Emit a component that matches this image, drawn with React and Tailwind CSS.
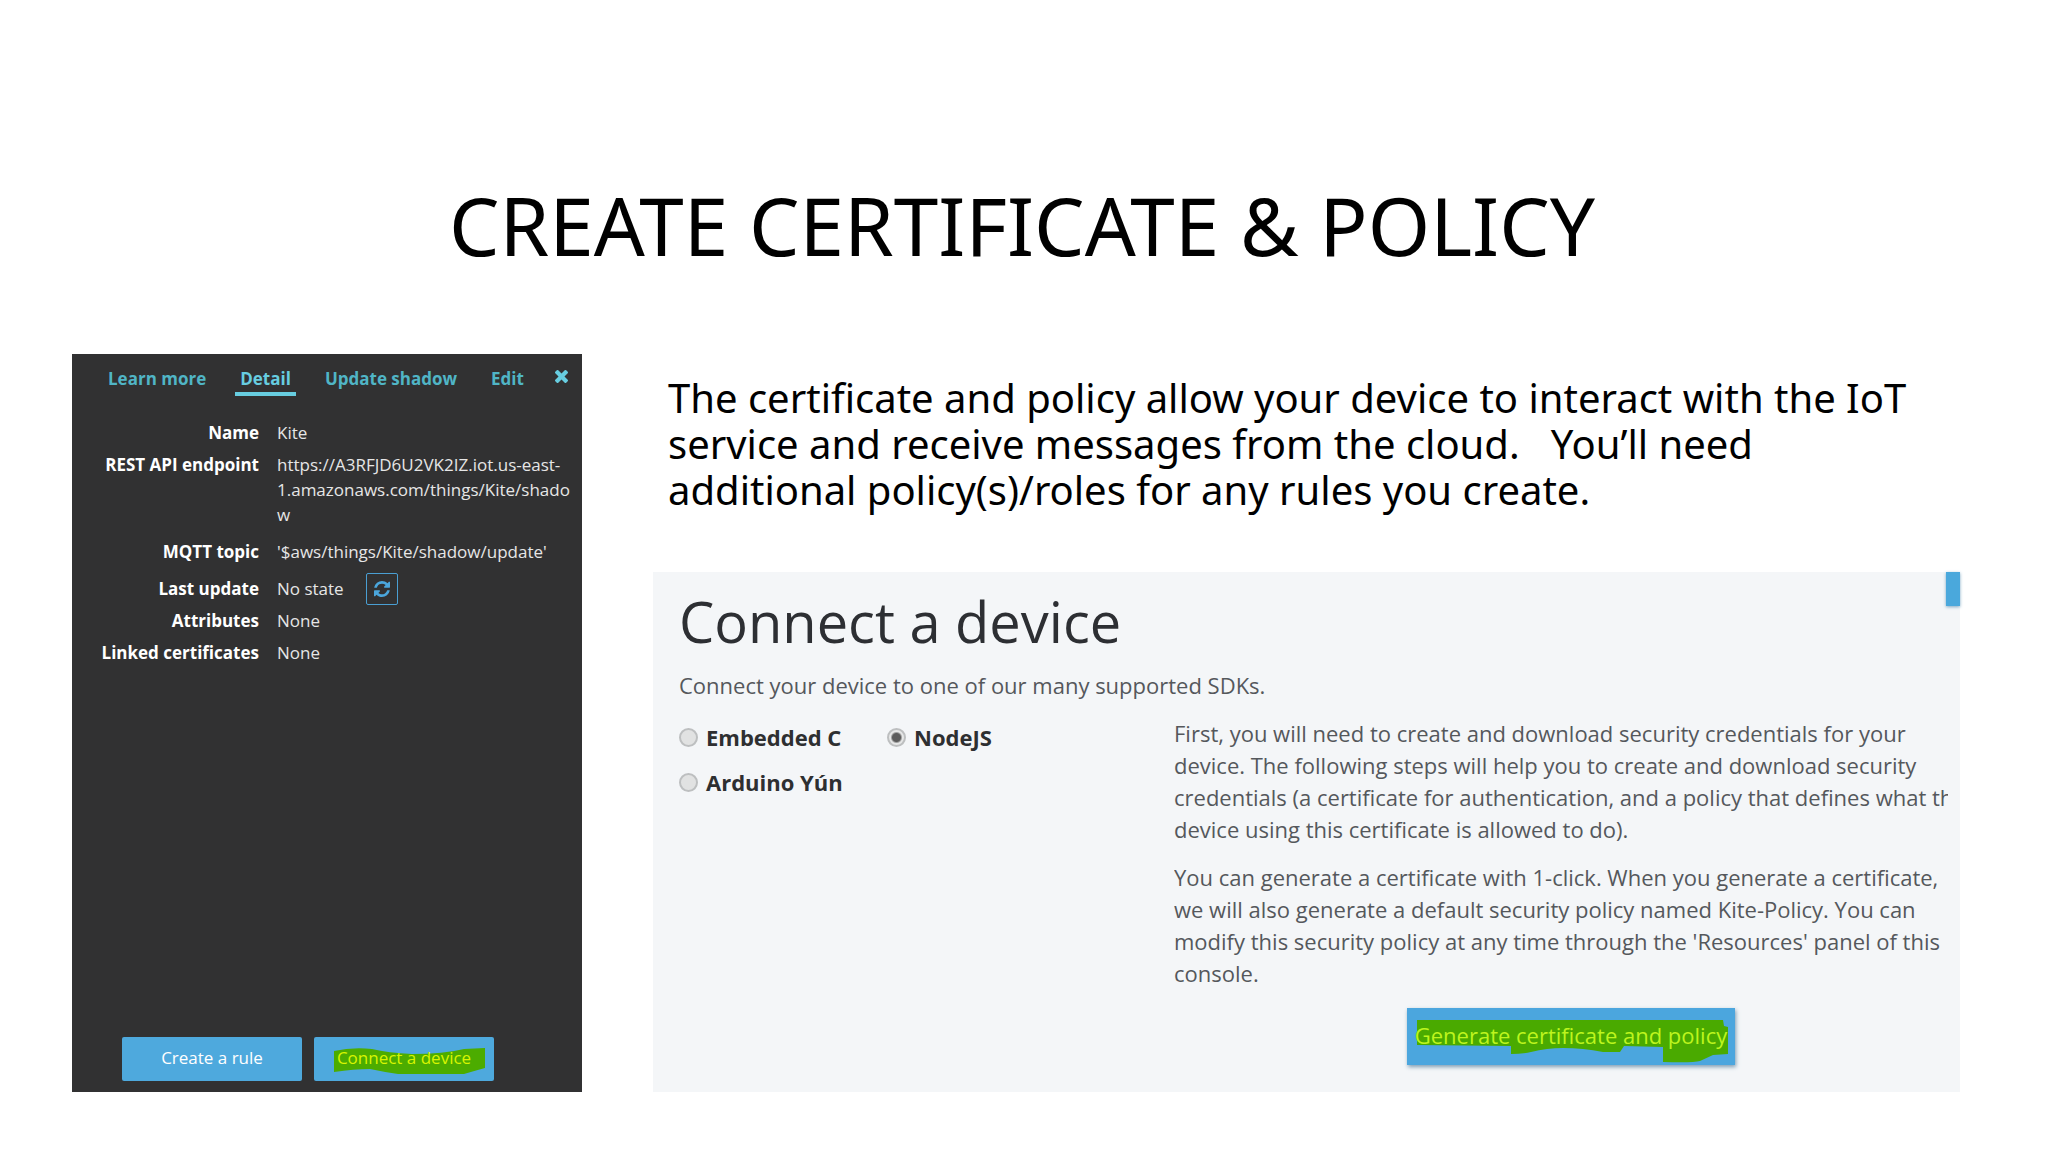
const tabs = ["Learn more", "Detail", "Update shadow", "Edit"];

function CloseIcon() {
  return (
    <svg viewBox="302 366 1188 1188" className="size-[13px]" fill="currentColor" aria-hidden="true">
      <path d="M1490 1322q0 40-28 68l-136 136q-28 28-68 28t-68-28l-294-294-294 294q-28 28-68 28t-68-28l-136-136q-28-28-28-68t28-68l294-294-294-294q-28-28-28-68t28-68l136-136q28-28 68-28t68 28l294 294 294-294q28-28 68-28t68 28l136 136q28 28 28 68t-28 68l-294 294 294 294q28 28 28 68z" />
    </svg>
  );
}

function RefreshIcon() {
  return (
    <svg viewBox="0 0 1536 1536" className="size-4" fill="currentColor" aria-hidden="true">
      <path d="M1511 928q0 5-1 7-64 268-268 434.5t-478 166.5q-146 0-282.5-55t-243.5-157l-129 129q-19 19-45 19t-45-19-19-45v-448q0-26 19-45t45-19h448q26 0 45 19t19 45-19 45l-137 137q71 66 161 102t187 36q134 0 250-65t186-179q11-17 53-117 8-23 30-23h192q13 0 22.5 9.5t9.5 22.5zm25-800v448q0 26-19 45t-45 19h-448q-26 0-45-19t-19-45 19-45l138-138q-148-137-349-137-134 0-250 65t-186 179q-11 17-53 117-8 23-30 23h-199q-13 0-22.5-9.5t-9.5-22.5v-7q65-268 270-434.5t480-166.5q146 0 284 55.5t245 156.5l130-129q19-19 45-19t45 19 19 45z" />
    </svg>
  );
}

function Row({ label, children, className = "" }) {
  return (
    <div className={`flex gap-[18px] ${className}`}>
      <dt className="w-[187px] shrink-0 text-right font-bold text-white">{label}</dt>
      <dd className="min-w-0 flex-1 break-all text-[#e6e6e6]">{children}</dd>
    </div>
  );
}

function DetailPanel() {
  return (
    <aside className="flex w-[510px] shrink-0 flex-col bg-[#313132] font-['Open_Sans',sans-serif] text-[17px] leading-[25px]">
      <nav className="flex items-start pt-3 pr-[14px] pl-[31px] font-bold text-[#50b5c6]">
        <div className="flex gap-6">
          {tabs.map((tab) => (
            <a
              key={tab}
              href="#"
              aria-current={tab === "Detail" ? "page" : undefined}
              className="border-b-4 border-transparent px-[5px] pb-px aria-[current=page]:border-[#67cde0] aria-[current=page]:text-[#67cde0]"
            >
              {tab}
            </a>
          ))}
        </div>
        <button type="button" aria-label="Close" className="mt-1 ml-auto text-[#67cde0]">
          <CloseIcon />
        </button>
      </nav>

      <dl className="mt-6 flex flex-col gap-[7px] pr-2">
        <Row label="Name">Kite</Row>
        <Row label="REST API endpoint" className="pb-[5px]">
          https://A3RFJD6U2VK2IZ.iot.us-east-
          <br />
          1.amazonaws.com/things/Kite/shado
          <br />w
        </Row>
        <Row label="MQTT topic" className="pb-[5px]">{"'$aws/things/Kite/shadow/update'"}</Row>
        <Row label="Last update">
          <div className="flex items-center gap-[22px]">
            No state
            <button
              type="button"
              aria-label="Refresh"
              className="-my-1 flex size-8 items-center justify-center rounded-xs border border-[#4a9fd3] text-[#4ba6dc]"
            >
              <RefreshIcon />
            </button>
          </div>
        </Row>
        <Row label="Attributes">None</Row>
        <Row label="Linked certificates">None</Row>
      </dl>

      <div className="mt-auto flex gap-3 px-[50px] pb-[11px]">
        <button type="button" className="h-11 w-[180px] rounded-xs bg-[#4ea9dd] pb-1 text-white">
          Create a rule
        </button>
        <button type="button" className="relative h-11 w-[180px] rounded-xs bg-[#4ea9dd] pb-1 text-[#d8f500]">
          <svg viewBox="0 0 180 44" className="absolute inset-0 size-full" fill="#4cac00" aria-hidden="true">
            <path d="M20 14Q38 10 58 12Q74 16 98 17Q130 17 150 12L171 11L171 31Q160 34 150 37H84Q70 35 56 32Q40 32 20 35Z" />
          </svg>
          <span className="relative">Connect a device</span>
        </button>
      </div>
    </aside>
  );
}

function Sdk({ id, label, checked }) {
  return (
    <div className="flex items-center gap-2">
      <input
        type="radio"
        name="sdk"
        id={id}
        defaultChecked={checked}
        className="size-[19px] appearance-none rounded-full border-2 border-[#bdbfc0] bg-[#e1e2e2] checked:bg-[radial-gradient(circle,#5c5c5c_0_4px,#e6e7e7_6px)]"
      />
      <label htmlFor={id} className="font-bold whitespace-nowrap text-[#2e2f31]">
        {label}
      </label>
    </div>
  );
}

function ConnectPanel() {
  return (
    <section className="relative mt-[59px] bg-[#f4f6f8] pt-[17px] pr-3 pb-[27px] pl-[26px] font-['Open_Sans',sans-serif] text-[22px] leading-8 text-[#55585c]">
      <div className="absolute top-0 right-0 h-[34px] w-[14px] bg-[#4aa8dc] shadow-[0_1px_3px_#7fa9c4]" />
      <h2 className="text-[56px] leading-[64px] text-[#2d2f33]">Connect a device</h2>
      <p className="mt-4">Connect your device to one of our many supported SDKs.</p>

      <div className="mt-4 flex">
        <fieldset
          aria-label="SDK"
          className="mt-1 grid w-[495px] shrink-0 grid-cols-[208px_1fr] content-start gap-y-[13px]"
        >
          <Sdk id="embedded-c" label="Embedded C" />
          <Sdk id="nodejs" label="NodeJS" checked />
          <Sdk id="arduino" label="Arduino Yún" />
        </fieldset>

        <div className="min-w-0 flex-1">
          <p className="overflow-hidden whitespace-nowrap">
            First, you will need to create and download security credentials for your
            <br />
            device. The following steps will help you to create and download security
            <br />
            credentials (a certificate for authentication, and a policy that defines what the
            <br />
            device using this certificate is allowed to do).
          </p>
          <p className="mt-4 overflow-hidden whitespace-nowrap">
            You can generate a certificate with 1-click. When you generate a certificate,
            <br />
            we will also generate a default security policy named Kite-Policy. You can
            <br />
            modify this security policy at any time through the 'Resources' panel of this
            <br />
            console.
          </p>
          <div className="mt-[19px] flex justify-center pl-5">
            <button
              type="button"
              className="relative h-[57px] w-[328px] bg-[#4ba6de] pb-1 text-[#bdf51e] shadow-[1px_2px_4px_#7d9db3]"
            >
              <svg viewBox="0 0 328 57" className="absolute inset-0 size-full" fill="#4aaa00" aria-hidden="true">
                <path d="M10 12H316L317 18L321 19V46L306 47L293 53Q286 55 256 54V39L217 38L213 44L196 44Q176 40 156 40Q140 40 124 44Q114 46 104 46V38L10 37Z" />
              </svg>
              <span className="relative">Generate certificate and policy</span>
            </button>
          </div>
        </div>
      </div>
    </section>
  );
}

export default function App() {
  return (
    <main className="min-h-screen bg-white pt-[185px] pr-[88px] pb-[60px] pl-[72px] font-['Noto_Sans',sans-serif] text-black">
      <h1 className="pl-3 text-center text-[80px] leading-[80px]">CREATE CERTIFICATE &amp; POLICY</h1>
      <div className="mt-[89px] flex gap-[71px]">
        <DetailPanel />
        <div className="min-w-0 flex-1 pt-[21px]">
          <p className="pl-[15px] text-[40px] leading-[46px]">
            The certificate and policy allow your device to interact with the IoT
            <br />
            service and receive messages from the cloud. &nbsp; You’ll need
            <br />
            additional policy(s)/roles for any rules you create.
          </p>
          <ConnectPanel />
        </div>
      </div>
    </main>
  );
}
